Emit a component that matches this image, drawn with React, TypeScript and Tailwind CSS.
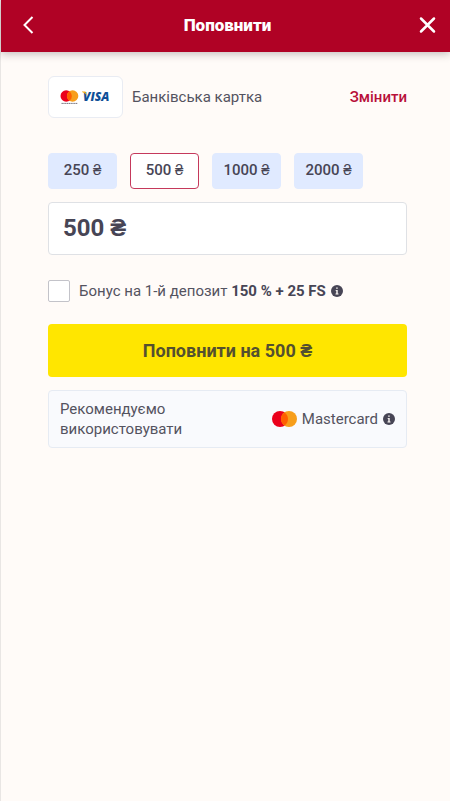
import { useState } from "react";

const AMOUNTS = [250, 500, 1000, 2000];

function InfoIcon() {
  return (
    <svg viewBox="0 0 12 12" className="size-3 shrink-0" aria-hidden="true">
      <circle cx="6" cy="6" r="6" fill="#474555" />
      <path d="M5.2 2.4h1.5v1.4H5.2zM4.6 4.9h2.1v3.6h.8v.9H4.5v-.9h.8V5.8h-.7z" fill="#fffbf8" />
    </svg>
  );
}

function MastercardMark({ className }: { className: string }) {
  return (
    <svg viewBox="0 0 25 16" className={className} aria-hidden="true">
      <circle cx="8" cy="8" r="8" fill="#eb001b" />
      <circle cx="17" cy="8" r="8" fill="#f79e1b" />
      <path d="M12.5 1.4a8 8 0 0 1 0 13.2a8 8 0 0 1 0-13.2z" fill="#ff5f00" />
    </svg>
  );
}

function CardLogos() {
  return (
    <div className="flex h-[42px] w-[75px] shrink-0 items-center justify-center rounded-md border border-[#e9ecf3] bg-white">
      <svg viewBox="0 0 53 20" className="h-5 w-[53px]" role="img" aria-label="Mastercard, Visa">
        <circle cx="7.200" cy="9" r="5.7" fill="#eb001b" />
        <circle cx="13.600" cy="9" r="5.7" fill="#f79e1b" />
        <path d="M10.400 4.300a5.700 5.700 0 0 1 0 9.400a5.700 5.700 0 0 1 0-9.400z" fill="#ff5f00" />
        <path d="M2.500 16.400h16" stroke="#77737d" strokeWidth="1" strokeDasharray="1.4 .4" />
        <text x="24" y="14" fontSize="12" fontWeight="800" fontStyle="italic" fontFamily="'Open Sans', sans-serif" fill="#0e4f97">
          VISA
        </text>
        <path d="M23 4.600h3.400l1.800 4.400c-1.200-2-2.600-3.300-5.200-4z" fill="#f2ae14" />
      </svg>
    </div>
  );
}

export default function App() {
  const [amount, setAmount] = useState(500);
  const [text, setText] = useState("500 ₴");

  return (
    <div className="min-h-screen border-l border-[#e9e6e4] bg-[#fffbf8] font-['Roboto',sans-serif] text-[15px] leading-5 text-[#54535f]">
      <header className="flex h-[52px] items-center justify-between bg-[#b00225] pr-3 pb-[3px] pl-4 text-white shadow-[0_2px_8px_rgba(60,50,50,0.3)]">
        <button type="button" aria-label="Назад" className="flex size-5 items-center justify-center">
          <svg viewBox="0 0 20 20" className="size-5" fill="none" stroke="currentColor" strokeWidth="2" aria-hidden="true">
            <path d="M15.500 2 7.500 10l8 8" />
          </svg>
        </button>
        <h1 className="text-[17px] font-black">Поповнити</h1>
        <button type="button" aria-label="Закрити" className="flex size-5 items-center justify-center">
          <svg viewBox="0 0 20 20" className="size-5" fill="none" stroke="currentColor" strokeWidth="2.500" strokeLinecap="round" aria-hidden="true">
            <path d="m3 3.500 13 13M16 3.500l-13 13" />
          </svg>
        </button>
      </header>

      <main className="pt-6 pr-[43px] pl-[47px]">
        <section className="flex items-center">
          <CardLogos />
          <span className="ml-[9px] grow">Банківська картка</span>
          <button type="button" className="font-medium text-[#b8103a]">Змінити</button>
        </section>

        <div className="mt-[35px] flex gap-[13px]">
          {AMOUNTS.map((value) => (
            <button
              key={value}
              type="button"
              aria-pressed={amount === value}
              onClick={() => {
                setAmount(value);
                setText(`${value} ₴`);
              }}
              className={`h-9 w-[69px] rounded border pb-0.5 font-medium text-[#474555] ${
                amount === value ? "border-[#c5395c] bg-white" : "border-[#e0eaff] bg-[#e0eaff]"
              }`}
            >
              {value} ₴
            </button>
          ))}
        </div>

        <input
          aria-label="Сума"
          value={text}
          onChange={(event) => {
            setText(event.target.value);
            setAmount(parseInt(event.target.value, 10) || 0);
          }}
          className="mt-[13px] block h-[53px] w-full rounded border border-[#dfe1e5] bg-white px-[14px] pb-0.5 text-2xl font-bold text-[#474555] outline-none"
        />

        <div className="mt-[25px] flex items-center">
          <input
            id="bonus"
            type="checkbox"
            className="size-[22px] shrink-0 appearance-none rounded-xs border border-[#c3c3c9] bg-white checked:bg-[#b00225]"
          />
          <label htmlFor="bonus" className="ml-[9px] mr-[5px]">
            Бонус на 1-й депозит <b className="font-bold text-[#474555]">150 % + 25 FS</b>
          </label>
          <InfoIcon />
        </div>

        <button
          type="button"
          className="mt-[22px] h-[53px] w-full rounded bg-[#ffe600] text-[18px] font-bold text-[#54502f]"
        >
          Поповнити на {amount} ₴
        </button>

        <section className="mt-[13px] flex items-center justify-between rounded border border-[#e6ebf3] bg-[#f9fafd] px-[11px] py-2">
          <p className="w-[140px]">Рекомендуємо використовувати</p>
          <div className="flex items-center">
            <MastercardMark className="h-4 w-[25px]" />
            <span className="mr-[5px] ml-[5px]">Mastercard</span>
            <InfoIcon />
          </div>
        </section>
      </main>
    </div>
  );
}
